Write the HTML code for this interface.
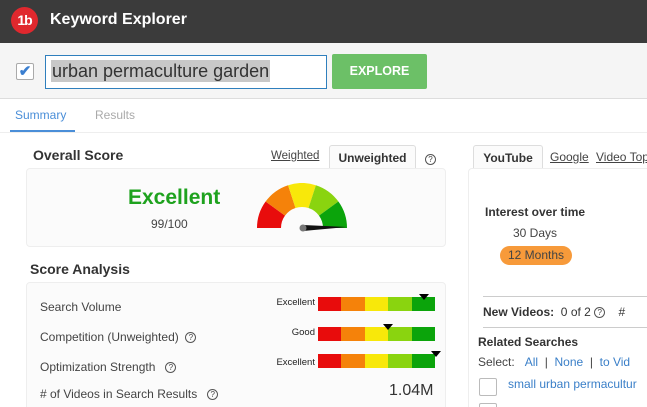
<!DOCTYPE html>
<html><head><meta charset="utf-8"><style>
*{margin:0;padding:0;box-sizing:border-box}
html,body{width:647px;height:407px;overflow:hidden}
body{background:#fff;font-family:"Liberation Sans",Arial,sans-serif;position:relative;color:#333}
.a{position:absolute;white-space:nowrap}
.hdr{left:0;top:0;width:647px;height:43px;background:#3b3b3b}
.srch{left:0;top:43px;width:647px;height:56px;background:#f5f5f5;border-bottom:1px solid #ddd}
.card{border:1px solid #eee;border-radius:4px;background:#fbfbfb}
.bar{display:flex;height:14px;width:117px}
.bar i{flex:1}
.q{display:inline-block;width:11px;height:11px;border:1px solid #555;border-radius:50%;font-size:8px;line-height:9px;text-align:center;font-style:normal;color:#444;vertical-align:1px}
.tri{width:0;height:0;border-left:5px solid transparent;border-right:5px solid transparent;border-top:6px solid #000}
.lbl{font-size:12px;color:#444}
.sm{font-size:9.5px;color:#222;text-align:right;width:60px}
</style></head><body>
<div class="a hdr"></div>
<div class="a" style="left:11px;top:7px;width:27px;height:27px;border-radius:50%;background:#e0282e;color:#fff;font-weight:bold;font-size:14px;text-align:center;line-height:27px;letter-spacing:-1px">1b</div>
<div class="a" style="left:50px;top:11px;color:#fff;font-weight:bold;font-size:16px">Keyword Explorer</div>
<div class="a srch"></div>
<div class="a" style="left:16px;top:63px;width:18px;height:17px;border:1px solid #aaa;background:#fff;border-radius:2px;color:#3b7fd0;font-size:15px;line-height:15px;text-align:center;font-weight:bold">✔</div>
<div class="a" style="left:45px;top:55px;width:282px;height:34px;border:1px solid #2f7fbd;background:#fff"></div>
<div class="a" style="left:51px;top:60px;background:#c8c8c8;color:#333;font-size:18px;line-height:22px;padding:0 1px">urban permaculture garden</div>
<div class="a" style="left:332px;top:54px;width:95px;height:35px;background:#6cc067;border-radius:2px;color:#fff;font-weight:bold;font-size:12.5px;text-align:center;line-height:35px">EXPLORE</div>
<div class="a" style="left:15px;top:108px;font-size:12px;color:#4a8ed8">Summary</div>
<div class="a" style="left:10px;top:130px;width:65px;height:2px;background:#4a8ed8"></div>
<div class="a" style="left:95px;top:108px;font-size:12px;color:#aaa">Results</div>
<div class="a" style="left:0;top:132px;width:647px;height:1px;background:#eee"></div>

<div class="a" style="left:33px;top:147px;font-size:14px;font-weight:bold;color:#333">Overall Score</div>
<div class="a" style="left:271px;top:150px;font-size:11.5px;text-decoration:underline;color:#444">Weighted</div>
<div class="a" style="left:329px;top:145px;width:87px;height:24px;border:1px solid #ddd;border-bottom:none;border-radius:3px 3px 0 0;background:#fbfbfb;font-size:12px;font-weight:bold;text-align:center;line-height:24px;color:#333">Unweighted</div>
<div class="a" style="left:425px;top:150px"><i class="q">?</i></div>
<div class="a card" style="left:26px;top:168px;width:420px;height:79px"></div>
<div class="a" style="left:128px;top:186px;font-size:21px;font-weight:bold;color:#1ea21e">Excellent</div>
<div class="a" style="left:151px;top:217px;font-size:12px;color:#444">99/100</div>
<svg class="a" style="left:257px;top:183px" width="95" height="52" viewBox="0 0 95 52">
<path d="M0 45A45 45 0 0 1 8.6 18.55L28 32.65A21 21 0 0 0 24 45Z" fill="#e80c0c"/>
<path d="M8.6 18.55A45 45 0 0 1 31.1 2.2L38.5 25A21 21 0 0 0 28 32.65Z" fill="#f5820a"/>
<path d="M31.1 2.2A45 45 0 0 1 58.9 2.2L51.5 25A21 21 0 0 0 38.5 25Z" fill="#f8e80a"/>
<path d="M58.9 2.2A45 45 0 0 1 81.4 18.55L62 32.65A21 21 0 0 0 51.5 25Z" fill="#8ad40f"/>
<path d="M81.4 18.55A45 45 0 0 1 90 45L66 45A21 21 0 0 0 62 32.65Z" fill="#0ba40b"/>
<path d="M46 42L90 44L46 48Z" fill="#111"/>
<circle cx="46" cy="45" r="3.5" fill="#777"/>
</svg>

<div class="a" style="left:30px;top:261px;font-size:14px;font-weight:bold;color:#333">Score Analysis</div>
<div class="a card" style="left:26px;top:282px;width:420px;height:130px"></div>
<div class="a lbl" style="left:40px;top:300px">Search Volume</div>
<div class="a lbl" style="left:40px;top:330px">Competition (Unweighted) &nbsp;<i class="q">?</i></div>
<div class="a lbl" style="left:40px;top:360px">Optimization Strength &nbsp;&nbsp;<i class="q">?</i></div>
<div class="a lbl" style="left:40px;top:387px"># of Videos in Search Results &nbsp;&nbsp;<i class="q">?</i></div>
<div class="a sm" style="left:255px;top:297px">Excellent</div>
<div class="a sm" style="left:255px;top:327px">Good</div>
<div class="a sm" style="left:255px;top:357px">Excellent</div>
<div class="a bar" style="left:318px;top:297px"><i style="background:#e80c0c"></i><i style="background:#f5820a"></i><i style="background:#f8e80a"></i><i style="background:#8ad40f"></i><i style="background:#0ba40b"></i></div>
<div class="a bar" style="left:318px;top:327px"><i style="background:#e80c0c"></i><i style="background:#f5820a"></i><i style="background:#f8e80a"></i><i style="background:#8ad40f"></i><i style="background:#0ba40b"></i></div>
<div class="a bar" style="left:318px;top:354px"><i style="background:#e80c0c"></i><i style="background:#f5820a"></i><i style="background:#f8e80a"></i><i style="background:#8ad40f"></i><i style="background:#0ba40b"></i></div>
<div class="a tri" style="left:419px;top:294px"></div>
<div class="a tri" style="left:383px;top:324px"></div>
<div class="a tri" style="left:431px;top:351px"></div>
<div class="a" style="left:389px;top:382px;font-size:16px;color:#333">1.04M</div>

<div class="a" style="left:473px;top:145px;width:70px;height:24px;border:1px solid #ddd;border-bottom:none;border-radius:3px 3px 0 0;background:#fbfbfb;font-size:12px;font-weight:bold;text-align:center;line-height:24px">YouTube</div>
<div class="a" style="left:550px;top:150px;font-size:12px;text-decoration:underline;color:#444">Google</div>
<div class="a" style="left:596px;top:150px;font-size:12px;text-decoration:underline;color:#444">Video Top</div>
<div class="a card" style="left:468px;top:168px;width:200px;height:250px;background:#fff"></div>
<div class="a" style="left:485px;top:205px;font-size:12px;font-weight:bold;color:#333">Interest over time</div>
<div class="a" style="left:513px;top:226px;font-size:12px;color:#444">30 Days</div>
<div class="a" style="left:500px;top:246px;width:72px;height:19px;border-radius:10px;background:#f79a3a;font-size:12px;color:#444;text-align:center;line-height:19px">12 Months</div>
<div class="a" style="left:483px;top:296px;width:164px;height:1px;background:#ccc"></div>
<div class="a" style="left:483px;top:305px;font-size:12px;color:#333"><b>New Videos:</b>&nbsp; 0 of 2 <i class="q">?</i> &nbsp;&nbsp;&nbsp;#</div>
<div class="a" style="left:483px;top:327px;width:164px;height:1px;background:#ccc"></div>
<div class="a" style="left:478px;top:335px;font-size:12px;font-weight:bold;color:#333">Related Searches</div>
<div class="a" style="left:478px;top:355px;font-size:12px;color:#444">Select: &nbsp;&nbsp;<span style="color:#3a7fc8">All</span> &nbsp;| &nbsp;<span style="color:#3a7fc8">None</span> &nbsp;| &nbsp;<span style="color:#3a7fc8">to Vid</span></div>
<div class="a" style="left:479px;top:378px;width:18px;height:18px;border:1px solid #bbb;border-radius:2px;background:#fff"></div>
<div class="a" style="left:508px;top:377px;font-size:12px;color:#3a7fc8">small urban permacultur</div>
<div class="a" style="left:479px;top:403px;width:18px;height:18px;border:1px solid #bbb;border-radius:2px;background:#fff"></div>
</body></html>
